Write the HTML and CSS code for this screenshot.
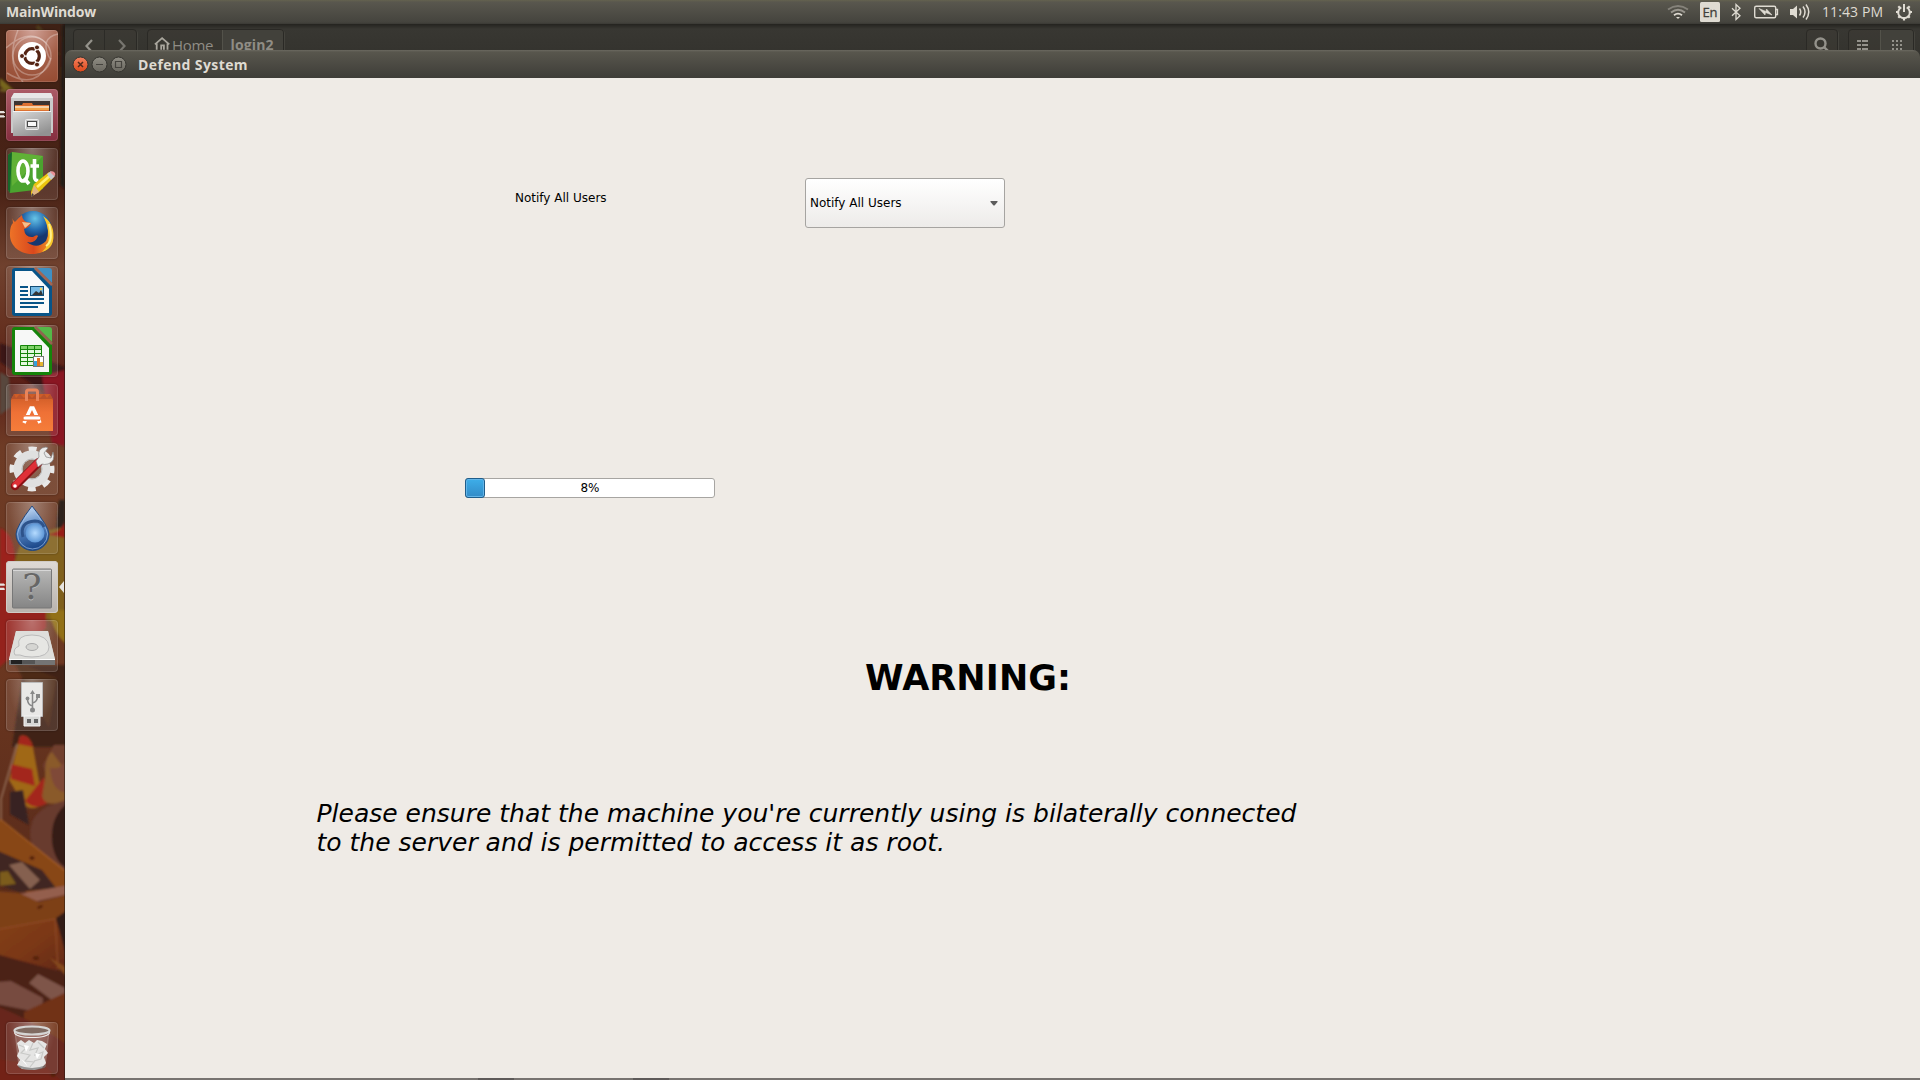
FILE: index.html
```html
<!DOCTYPE html>
<html lang="en">
<head>
<meta charset="utf-8">
<title>Defend System</title>
<link rel="stylesheet" href="styles.css">
</head>
<body>
<header class="panel">
  <span class="panel-title">MainWindow</span>
  <div class="indicators">
    <svg width="270" height="24" viewBox="1650 0 270 24" fill="none" stroke="#dfdbd2">
      <g stroke-width="1.8"><path d="M1668 9.500Q1678 2.500 1688 9.500" stroke="#85827a"/><path d="M1671 12.500Q1678 7 1685 12.500" stroke="#99968e"/><path d="M1674 15.300Q1678 12 1682 15.300"/></g>
      <path d="M1676 17h4l-2 2z" fill="#dfdbd2" stroke="none"/>
      <rect x="1700" y="2" width="20" height="20" rx="1.500" fill="#dfdbd2" stroke="none"/>
      <path d="M1732 8.200l8 7.500-4 3.800V4.500l4 3.700-8 7.500" stroke-width="1.300"/>
      <rect x="1754.700" y="6.200" width="21" height="11.600" rx="1.500" stroke-width="1.400"/><path d="M1776 9.500h1.500v5h-1.500" stroke-width="1.300"/>
      <path d="M1759 8.500l7 3 .5-2.500 5.500 6-6.500-2.500-.5 2.500z" fill="#dfdbd2" stroke="#dfdbd2" stroke-width=".6"/>
      <path d="M1790 9h3l4-3.500v13L1793 15h-3z" fill="#dfdbd2" stroke="none"/>
      <path d="M1799.500 8.500q2.500 3.500 0 7M1803 6.500q4 5.500 0 11M1806 4.500q5.500 7.500 0 15" stroke-width="1.500"/>
      <g stroke-width="2"><path d="M1901.300 7.300a5.800 5.800 0 1 0 5.400 0M1904 4v8"/><path d="M1904 17v3.500M1896 12h3M1909 12h3M1898.300 6.300l2 2M1909.700 6.300l-2 2M1898.300 17.700l2-2M1909.700 17.700l-2-2" stroke-width="2.200"/></g>
    </svg>
    <span class="lang">En</span>
    <span class="clock">11:43 PM</span>
  </div>
</header>
<div class="desktop">
  <nav class="launcher">
    <svg class="wallpaper" width="65" height="1056" viewBox="0 24 65 1056">
      <defs>
        <linearGradient id="wall" x1="0" y1="0" x2="0" y2="1">
          <stop offset="0" stop-color="#3e2115"/><stop offset=".16" stop-color="#4b2316"/><stop offset=".23" stop-color="#70412e"/><stop offset=".29" stop-color="#65301f"/><stop offset=".34" stop-color="#5b2018"/><stop offset=".4" stop-color="#6e3b25"/><stop offset=".6" stop-color="#6b3720"/><stop offset="1" stop-color="#4b2116"/>
        </linearGradient>
        <linearGradient id="wood" x1="0" y1="0" x2="1" y2="1"><stop offset="0" stop-color="#84401a"/><stop offset=".55" stop-color="#7a3718"/><stop offset="1" stop-color="#622817"/></linearGradient>
        <filter id="soft" x="-5%" y="-5%" width="110%" height="110%"><feGaussianBlur stdDeviation="1.300"/></filter>
      </defs>
      <rect y="24" width="65" height="1056" fill="url(#wall)"/>
      <g filter="url(#soft)">
        <path d="M0 78q10 9 19 16l-3 4Q7 93 0 86z" fill="#77661c"/><path d="M0 90q20 1 30 12" stroke="#6c5822" stroke-width="3" fill="none"/>
        <path d="M37 26q14 16 20 29" stroke="#4e3a1b" stroke-width="4" fill="none"/>
        <path d="M62 24h3v165l-5-4z" fill="#241b18"/>
        <path d="M0 343l65 24v40L0 362z" fill="#3a1713"/><path d="M42 376l23-6v76l-13-3z" fill="#8a1724"/><path d="M0 372l9 5 2 30-11 8z" fill="#59473c"/>
        <path d="M59 500h6v30h-9z" fill="#2e211e"/>
        <path d="M0 528q15 6 15 34v58L0 668z" fill="#9b231c"/><path d="M15 562q5-29 24-30l26-5v100L0 600z" fill="#80611a"/><path d="M45 534q15 0 20-12v16z" fill="#971d18"/>
        <path d="M-4 586h50v42L-4 670z" fill="#94211a"/><path d="M49 610h20v36q-15-9-20-36z" fill="#927019"/>
        <path d="M24 665h45v82H12z" fill="#402118"/><path d="M54 745h15v110L43 765z" fill="#71402f"/>
        <path d="M13 660l44 18-8 50z" fill="#4e2a19"/>
        <path d="M20 736q9-3 13 11l10 55q-8 11-19 3L9 780z" fill="#a06719"/><path d="M20 736q9-3 13 11l-15-3zM11 764l21 5 3 17-24-7zM25 801l19-24 5 25q-13 10-24-1z" fill="#a3281a"/>
        <path d="M17 744l-16 55v25" stroke="#94705a" stroke-width="1.500" fill="none"/>
        <path d="M45 778q0-24 7-26l13 18v30q-20 9-23-4z" fill="#8a5a2a"/><path d="M50 768q11 2 15-7v31q-13-1-15-24z" fill="#7f4838"/>
        <path d="M10 792l13-2 6 35-19-11z" fill="#372121"/>
        <path d="M30 835q0-29 35-33v76q-30-5-35-43z" fill="#683a2f"/><path d="M69 802q-19 13-17 40 3 22 17 27z" fill="#351b15"/>
        <path d="M-4 817l73 56v13l-36 16L-4 850z" fill="#884619"/><path d="M0 819l65 52" stroke="#a15c26" stroke-width="1.500"/>
        <path d="M-4 850l46 20 14 18-37 4-23-8z" fill="#402520"/><path d="M9 865l13-3 18 18-10 9z" fill="#85604f"/><path d="M0 872l8-1 8 13-16 2z" fill="#7b5b1c"/><path d="M19 894l50-9v9l-35 8z" fill="#945f4e"/>
        <path d="M-4 891l23 2 20 9 30-8v21l-14 6-59 10z" fill="#7d4019"/><path d="M-4 929l59-10 10 20v31L-4 968z" fill="url(#wood)"/><path d="M0 929l55-10 3 50" stroke="#8e4a25" stroke-width="1.300" fill="none"/>
        <path d="M56 918l13-9v57z" fill="#301a18"/><path d="M-4 954l73 20v44L-4 1032z" fill="#4b2116"/><path d="M29 983l9-9 27 14v22z" fill="#7e5548"/><path d="M-4 982l15-1 32 17-1 15-46-9z" fill="#774b40"/><path d="M49 957l20 12v10z" fill="#84481c"/>
        <path d="M24 1012l45-21v53L24 1038z" fill="#713319"/><path d="M-4 1006q33 12 73 40v38H-4z" fill="#68281b"/><path d="M-4 1059l49 7 20 18H-4z" fill="#722417"/>
        <g fill="#54200e"><ellipse cx="32" cy="858" rx="2.500" ry="2"/><ellipse cx="36" cy="958" rx="3" ry="2"/><ellipse cx="53" cy="1075" rx="2.500" ry="2"/><ellipse cx="40" cy="907" rx="3" ry="1.500" transform="rotate(-25 40 907)"/></g>
      </g>
      <path d="M0 111h4v.7h1v1.300H4v.3H0zM0 115.200h4v.7h1v1.300H4v.3H0zM0 583.500h4v.7h1v1.300H4v.3H0zM0 587.700h4v.7h1v1.300H4v.3H0zM64 581v12l-5-6z" fill="#e8e4df"/>
      <path d="M64.500 24v1056" stroke="#1b1310" stroke-opacity=".45"/>
    </svg>
    <ul class="tiles">
      <li class="tile dash"><svg viewBox="0 0 52 52"><g fill="none" stroke="#fff" stroke-opacity=".28" stroke-width="1.500"><circle cx="26" cy="26" r="19"/><path d="M0 18Q24-3 40 13M12 0Q-1 33 17 52M1 43q30 19 44-15M52 4Q33 8 44 29"/></g><circle cx="26" cy="26" r="14" fill="#fff"/><circle cx="26" cy="26" r="7.300" fill="none" stroke="#542414" stroke-width="3.200" stroke-dasharray="13.600 1.700" stroke-dashoffset="7"/><g fill="#542414" stroke="#fff"><circle cx="16" cy="26" r="2.500"/><circle cx="31" cy="17.400" r="2.500"/><circle cx="31" cy="34.600" r="2.500"/></g></svg></li>
      <li class="tile files"><svg viewBox="0 0 52 52"><defs><linearGradient id="metal" x2=".6" y2="1"><stop stop-color="#dadada"/><stop offset="1" stop-color="#929292"/></linearGradient></defs><path d="M8 4h37l2 5v35H5V9z" fill="#cacaca"/><path d="M8 4h37l2 5H5z" fill="#e7e7e7"/><path d="M8 12h36v11H8z" fill="#3b3431"/><path d="M9 16h7l1-2h9l1 2h16v7H9z" fill="#dc7132"/><path d="M9 18h34" stroke="#fff2cf" stroke-width="1.300"/><path d="M9 20h34" stroke="#f2a54a" stroke-width="2"/><path d="M7 22h38v25H7z" fill="url(#metal)"/><path d="M7 22.500h38" stroke="#f4f4f4"/><rect x="19.500" y="30.500" width="13" height="10" rx="1" fill="#c3c3c3" stroke="#ececec"/><rect x="21.500" y="32.500" width="9" height="5" fill="#f8f8f8" stroke="#484848"/></svg></li>
      <li class="tile"><svg viewBox="0 0 52 52"><path d="M6 4l31 4v33L4 45 2 42V7z" fill="#4ba32f"/><path d="M6 4L2 7v35l2 3z" fill="#17672a"/><path d="M6 4l31 4-31 30z" fill="#72be3c" opacity=".55"/><ellipse cx="17" cy="23" rx="5" ry="10" fill="none" stroke="#fff" stroke-width="3.600"/><path d="M18 30l5 6M28.500 11v18q0 4 4 3.500M24.500 18h8.500" stroke="#fff" stroke-width="3.600" fill="none"/><path d="M25 44l3-8 15-12 5 5-15 15-8 4z" fill="#eac40e"/><path d="M31 39l15-13" stroke="#fff172" stroke-width="2.500"/><path d="M41 26l4-3 4 5-4 4z" fill="#c5c8ce"/><path d="M44 24q3-2 5 1 1 2-1 3z" fill="#e89196"/><path d="M28 37l5 7-8 5z" fill="#dfb483"/><path d="M26 45l2 2-3 2z" fill="#463f3c"/></svg></li>
      <li class="tile"><svg viewBox="0 0 52 52"><defs><radialGradient id="globe" cx=".55" cy=".2"><stop stop-color="#67c4e7"/><stop offset=".6" stop-color="#2369ad"/><stop offset="1" stop-color="#17376f"/></radialGradient><linearGradient id="fox" x1="0" x2="1"><stop stop-color="#ed7227"/><stop offset=".55" stop-color="#d9481d"/><stop offset="1" stop-color="#f3a027"/></linearGradient></defs><circle cx="27" cy="23" r="19" fill="url(#globe)"/><path d="M6 8q0 5 3 7 3-4 7-7 0 7 9 8-1 4-7 6 1 9 9 8 4-3 5-1-3 8-11 6 10 8 19-1Q45 24 38 10q7 7 9 19C47 41 37 47 26 47 12 47 3 37 4 26q0-7 3-10z" fill="url(#fox)"/><path d="M37 9q8 5 10 14 3 18-11 22 9-8 6-21-1-9-5-15z" fill="#f7c62c"/><path d="M43 17q5 17-3 22" stroke="#fff08b" stroke-width="2" fill="none"/><path d="M16 15l9 1-6 5z" fill="#f6c08b"/></svg></li>
      <li class="tile"><svg viewBox="0 0 52 52"><path d="M9 2h19l18 18v27q0 3-3 3H9q-3 0-3-3V5q0-3 3-3z" fill="#085488"/><path d="M9 5h17l17 18v24H9z" fill="#fafafa"/><path d="M31 2h12q3 0 3 3v12z" fill="#4090c3"/><path d="M29 2l17 17" stroke="#a36654" stroke-width="2.500"/><path d="M14 21h8M14 25h8M14 29h8M14 33h24M14 37h24M14 41h18" stroke="#085488" stroke-width="2"/><rect x="24.500" y="20.500" width="13" height="9" fill="#77bbe5" stroke="#124d76"/><path d="M26 29l4-4 3 2 2-3 2 5z" fill="#343434"/><circle cx="35" cy="23" r="1.300" fill="#f5d35e"/></svg></li>
      <li class="tile"><svg viewBox="0 0 52 52"><path d="M9 2h19l18 18v27q0 3-3 3H9q-3 0-3-3V5q0-3 3-3z" fill="#15840a"/><path d="M9 5h17l17 18v24H9z" fill="#f7f8f7"/><path d="M31 2h12q3 0 3 3v12z" fill="#55b848"/><path d="M29 2l17 17" stroke="#91654f" stroke-width="2.500"/><path d="M14.500 20.500h21v20h-21z" fill="#e4f8df"/><path d="M14 21h22v3H14z" fill="#81d36b"/><path d="M14.500 20.500h21v20h-21zM14 24.500h21M14 28.500h21M14 32.500h21M14 36.500h21M21.500 20v20M28.500 20v20" stroke="#15840a" fill="none"/><rect x="27.500" y="31.500" width="10" height="10" fill="#fff" stroke="#777"/><path d="M28 36h3v5h-3z" fill="#35a2dd"/><path d="M31 33h3v8h-3z" fill="#e07422"/><path d="M34 37h3v4h-3z" fill="#e4b533"/></svg></li>
      <li class="tile"><svg viewBox="0 0 52 52"><defs><linearGradient id="bag" x2="0" y2="1"><stop stop-color="#cc5b26"/><stop offset=".5" stop-color="#ef7136"/><stop offset="1" stop-color="#f57d3a"/></linearGradient></defs><path d="M8 10h36l3 6v31H5V16z" fill="url(#bag)"/><path d="M5 15l3-5 2 4 4-4 4 4 4-4 4 4 4-4 4 4 4-4 3 4 3-4 3 5z" fill="#b9522b"/><path d="M20.500 17V8q0-2 2-2h7q2 0 2 2v9" fill="none" stroke="#e9845a" stroke-width="3"/><path d="M18 39l7-15h2l7 15" fill="none" stroke="#fff" stroke-width="3.500"/><path d="M17 34h17" stroke="#f07a44" stroke-width="6"/><rect x="17.500" y="32.500" width="17" height="3" rx="1.500" fill="#fff"/></svg></li>
      <li class="tile"><svg viewBox="0 0 52 52"><circle cx="26" cy="26" r="20" fill="none" stroke="#e8e8e8" stroke-width="5" stroke-dasharray="8 7.708" stroke-dashoffset="4"/><circle cx="26" cy="26" r="14" fill="none" stroke="#e0e0e0" stroke-width="9"/><circle cx="26" cy="26" r="10" fill="none" stroke="#b8b8b8"/><path d="M9 43l24-24" stroke="#8b1115" stroke-width="8.500" stroke-linecap="round"/><path d="M9 42l23-23" stroke="#df3037" stroke-width="6" stroke-linecap="round"/><circle cx="9" cy="43" r="1.800" fill="#fff"/><path d="M30 18l3-4Q31 5 40 4l2 1-4 5 2 4 5 1 2-6q3 9-5 12-4 1-6 0l-4 3z" fill="#ececeb" stroke="#878787" stroke-width=".7"/></svg></li>
      <li class="tile"><svg viewBox="0 0 52 52"><defs><linearGradient id="drop" x2=".2" y2="1"><stop stop-color="#dcecff"/><stop offset=".5" stop-color="#5f8cc6"/><stop offset="1" stop-color="#1d4a8c"/></linearGradient><radialGradient id="swirl"><stop stop-color="#b5dbff"/><stop offset="1" stop-color="#5e97d6"/></radialGradient></defs><path d="M26 4Q43 25 43 32a16.500 16.500 0 0 1-33 0Q10 25 26 4z" fill="url(#drop)" stroke="#24497e"/><path d="M26 6Q41 25 41.500 32a15 15 0 0 1-30 0Q12 25 26 6z" fill="none" stroke="#a7c5ec" stroke-opacity=".65"/><circle cx="29" cy="31" r="9.500" fill="url(#swirl)"/><path d="M17 35q-4-15 12-16 7 0 9 6" stroke="#2e538b" stroke-width="3" fill="none"/></svg></li>
      <li class="tile active"><svg viewBox="0 0 52 52"><defs><linearGradient id="app" x2="0" y2="1"><stop stop-color="#b8b8b7"/><stop offset="1" stop-color="#858585"/></linearGradient></defs><rect x="6.500" y="8" width="39" height="39" rx="1" fill="url(#app)" stroke="#777"/><path d="M7 9.500h38" stroke="#d7d7d7"/></svg><span class="unknown">?</span></li>
      <li class="tile"><svg viewBox="0 0 52 52"><path d="M10 11h32l7 29v5H3v-5z" fill="#c9c9c7"/><path d="M10 11h32l7 28H3z" fill="#dededb"/><path d="M3 39h46v6H3z" fill="#747474"/><path d="M5 40h11v4H5z" fill="#222"/><path d="M16 40h13v4H16z" fill="#555"/><path d="M9 35Q6 29 13 26 10 15 26 15t17 12q0 10-17 10-8 0-12-2z" fill="#e6e6e3" stroke="#bbb"/><ellipse cx="26" cy="27" rx="6" ry="3.500" fill="#d5d5d2" stroke="#aaa"/><path d="M3 39.500h46" stroke="#fff"/></svg></li>
      <li class="tile"><svg viewBox="0 0 52 52"><path d="M15.500 3.500h21v34h-21z" fill="#e9e8e6" stroke="#bbb"/><path d="M18 37h16v10H18z" fill="#d8d8d6" stroke="#f4f4f4"/><path d="M21 40h4v4h-4zM28 40h4v4h-4z" fill="#656565"/><path d="M26.500 13v18M26.500 27q-5-1-5-7M26.500 24q5-1 5-7" fill="none" stroke="#888" stroke-width="1.500"/><path d="M24 15l2.500-4 2.500 4zM30 15h4v4h-4z" fill="#888"/><circle cx="21.500" cy="19.500" r="1.900" fill="#888"/><circle cx="26.500" cy="31" r="2.500" fill="#888"/></svg></li>
      <li class="tile trash"><svg viewBox="0 0 52 52"><path d="M9 9h34l-4 36q-13 5-26 0z" fill="#d2c3bc" fill-opacity=".18" stroke="#d8cbc5" stroke-opacity=".35"/><path d="M11 21l4-3 4 3 4-3 5 3 3-3 5 1 5 3-2 5 3 4-4 4 2 6-4 5-8 2-12-1-5-4 3-5-3-4 2-5z" fill="#e5e5e4"/><path d="M13 23l7 3-5 5 9 2-5 6 9 1-4 5M27 21l-3 7 8-2-3 7 8-3-2 7-7 2M32 20l6 6" stroke="#c8c9c7" stroke-width="1.200" fill="none"/><path d="M18 23l5 1-3 6zM29 31l5 1-3 5zM15 37l4 3 3 5z" fill="#fff"/><path d="M12 43q14 6 28 0l-1 3q-13 4-26 0z" fill="#555" fill-opacity=".55"/><ellipse cx="26" cy="8.500" rx="17.500" ry="4" fill="#806b62" stroke="#d5d5d4" stroke-width="2.200"/><path d="M8 9q2 6 18 6t18-6v2q-2 5-18 5T8 11z" fill="#ededec"/></svg></li>
    </ul>
  </nav>
  <main class="stage">
    <div class="toolbar">
      <div class="group nav"><svg width="64" height="26" viewBox="0 0 64 26" fill="none" stroke="#94928b" stroke-width="2.200"><path d="M18 10l-5.500 6 5.500 6"/><path d="M45 10l5.500 6-5.500 6" stroke="#77756f"/><path d="M30.500 0v26" stroke="#2c2b27" stroke-width="1"/></svg></div>
      <div class="group path">
        <svg width="20" height="22" viewBox="0 0 20 22" fill="none" stroke="#aaa79e" stroke-width="2"><path d="M1 17l8-7 8 7M3 16v7M15 16v7"/><path d="M8 23v-5h3v5"/></svg>
        <span class="home">Home</span><span class="crumb">login2</span>
      </div>
      <div class="group search"><svg width="32" height="26" viewBox="0 0 32 26" fill="none" stroke="#94928b" stroke-width="2.400"><circle cx="14.500" cy="14.500" r="5"/><path d="M18 18l5 5"/></svg></div>
      <div class="group views"><svg width="66" height="26" viewBox="0 0 66 26"><path d="M32 0h34v26H32z" fill="#42413b"/><path d="M32.500 0v26" stroke="#53524a"/><path d="M9 11h4v2H9zM14 11h6v2h-6zM9 15h4v2H9zM14 15h6v2h-6zM9 19h4v2H9zM14 19h6v2h-6zM44 11h2v2h-2zM48 11h2v2h-2zM52 11h2v2h-2zM44 15h2v2h-2zM48 15h2v2h-2zM52 15h2v2h-2zM44 19h2v2h-2zM48 19h2v2h-2zM52 19h2v2h-2z" fill="#94928b"/></svg></div>
    </div>
    <section class="window">
      <div class="titlebar">
        <svg width="56" height="28" viewBox="0 0 56 28"><defs><linearGradient id="close" x2="0" y2="1"><stop stop-color="#f58260"/><stop offset="1" stop-color="#dd4719"/></linearGradient><linearGradient id="dull" x2="0" y2="1"><stop stop-color="#908d84"/><stop offset="1" stop-color="#69675f"/></linearGradient></defs><g stroke="#35342f"><circle cx="8.500" cy="14.500" r="7.500" fill="url(#close)"/><circle cx="27.500" cy="14.500" r="7.500" fill="url(#dull)"/><circle cx="46.500" cy="14.500" r="7.500" fill="url(#dull)"/></g><path d="M6 12l5 5M11 12l-5 5" stroke="#51291b" stroke-width="1.500"/><path d="M24 14.500h7M43.500 11.500h6v6h-6z" stroke="#45433e" stroke-width="1.200" fill="none"/></svg>
        <span class="window-title">Defend System</span>
      </div>
      <div class="content">
        <div class="notify">
          <span class="notify-label">Notify All Users</span>
          <div class="combo"><span>Notify All Users</span><svg width="8" height="5" viewBox="0 0 8 5"><path d="M.5 0h7v1L4.500 4.500h-1L.5 1z" fill="#5c5c5c"/></svg></div>
        </div>
        <div class="progress"><div class="bar" style="width:8%"></div><span class="percent">8%</span></div>
        <h1>WARNING:</h1>
        <p>Please ensure that the machine you're currently using is bilaterally connected<br>to the server and is permitted to access it as root.</p>
      </div>
    </section>
    <div class="bottom-edge"><i></i><i></i></div>
  </main>
</div>
</body>
</html>
```
FILE: styles.css
```css
* { box-sizing: border-box; }
body {
  margin: 0; width: 1920px; height: 1080px; overflow: hidden;
  display: flex; flex-direction: column;
  font: 12px "DejaVu Sans", sans-serif; color: #000; background: #eeeae5;
}
svg { display: block; flex: none; }
.panel {
  height: 24px; flex: none; display: flex; justify-content: space-between;
  padding-left: 6px; color: #dfdbd2;
  background: linear-gradient(#64624f 0, #59574e 2px, #45443e 22px, #3a3935);
  font: 15px/22px "Open Sans", sans-serif; white-space: nowrap;
}
.panel-title { padding-top: 1px; font-weight: 700; font-size: 14px; letter-spacing: -.15px; }
.indicators { position: relative; }
.lang { position: absolute; left: 50px; top: 2px; width: 20px; text-align: center; color: #42413b; font-size: 13px; line-height: 20px; -webkit-text-stroke: .3px #42413b; }
.clock { position: absolute; left: 172px; top: 1px; font-size: 14px; letter-spacing: .1px; }
.desktop { flex: 1; min-height: 0; display: flex; }
.launcher { position: relative; width: 65px; flex: none; }
.wallpaper { position: absolute; left: 0; top: 0; }
.tiles {
  position: relative; height: 100%; margin: 0; padding: 6px 0 6px 6px; list-style: none;
  display: flex; flex-direction: column; gap: 7px;
}
.tile {
  position: relative; width: 52px; height: 52px; flex: none; border-radius: 4px; overflow: hidden;
  background: radial-gradient(ellipse at 50% 0, rgba(255,255,255,.36), rgba(255,255,255,.1) 65%);
  box-shadow: inset 0 0 0 1px rgba(255,255,255,.13), 0 0 2px rgba(0,0,0,.4);
}
.tile svg { width: 52px; height: 52px; }
.dash { background: radial-gradient(circle at 50% 0, #d1a297, #a35e47 55%, #954a31); }
.files { background: linear-gradient(#ab5b66, #852e3f); }
.active { background: linear-gradient(#dedad6, #b9b3ad); box-shadow: inset 0 0 0 1px #d0cbc5; }
.unknown { position: absolute; left: 0; top: 6px; width: 52px; text-align: center; font: 36px/40px "DejaVu Serif", serif; color: #666; text-shadow: 0 1px #bbb; }
.trash { margin-top: auto; }
.stage {
  flex: 1; min-width: 0; display: flex; flex-direction: column;
  background: linear-gradient(#24231f 0, #383732 5px, #34332e 30px);
}
.toolbar { height: 26px; flex: none; padding: 5px 6px 0 8px; display: flex; overflow: hidden; }
.group { height: 30px; border: 1px solid #2a2925; border-radius: 4px; background: rgba(65,64,57,.3); box-shadow: 1px 1px #44433d; overflow: hidden; }
.nav { width: 64px; }
.path { width: 137px; margin-left: 10px; padding-left: 6px; display: flex; color: #908d85; font: 15px/30px "Open Sans", sans-serif; }
.path svg { margin-top: -2px; width: 18px; }
.home { width: 50px; letter-spacing: -.3px; }
.crumb { width: 62px; padding-left: 8px; font-weight: 700; font-size: 14px; background: #42413b; border-left: 1px solid #53524a; letter-spacing: .15px; }
.search { width: 32px; margin-left: auto; }
.views { width: 66px; margin-left: 10px; }
.search svg, .views svg { margin: -1px; }
.window { height: 1028px; flex: none; display: flex; flex-direction: column; border-radius: 7px 7px 0 0; overflow: hidden; }
.titlebar {
  height: 28px; flex: none; padding-left: 7px; display: flex; gap: 10px;
  background: linear-gradient(#6b6960 0, #58564d 2px, #3e3d38);
  color: #dfdbd2; font: 700 14px/30px "Open Sans", sans-serif;
}
.window-title { letter-spacing: .4px; }
.content { flex: 1; background: #efebe6; }
.notify { display: flex; padding: 100px 0 0 450px; height: 150px; }
.notify-label { width: 290px; line-height: 14px; padding-top: 13px; }
.combo {
  width: 200px; height: 50px; padding: 0 6px 0 4px; display: flex; align-items: center; justify-content: space-between;
  border: 1px solid #a6a4a1; border-radius: 3px; background: linear-gradient(#fff, #edebe9);
}
.progress { position: relative; width: 250px; height: 20px; margin: 250px 0 0 400px; border: 1px solid #a7a5a2; border-radius: 3px; background: #fff; }
.bar { position: absolute; left: -1px; top: -1px; height: 20px; border: 1px solid #1f5d8a; border-radius: 3px; background: linear-gradient(#3daee9, #338bc7); box-shadow: inset 0 0 0 1px #63b5e8; }
.percent { position: absolute; inset: 0; text-align: center; line-height: 18px; }
h1 { margin: 159px 0 0 800px; font-size: 35px; line-height: 42px; letter-spacing: .1px; }
p { margin: 100px 0 0 251.500px; font-size: 25px; line-height: 29px; font-style: italic; white-space: nowrap; }
.bottom-edge { height: 2px; flex: none; background: #777370; display: flex; padding-left: 413px; gap: 119px; }
.bottom-edge i { width: 36px; background: #5e5a59; }
```
